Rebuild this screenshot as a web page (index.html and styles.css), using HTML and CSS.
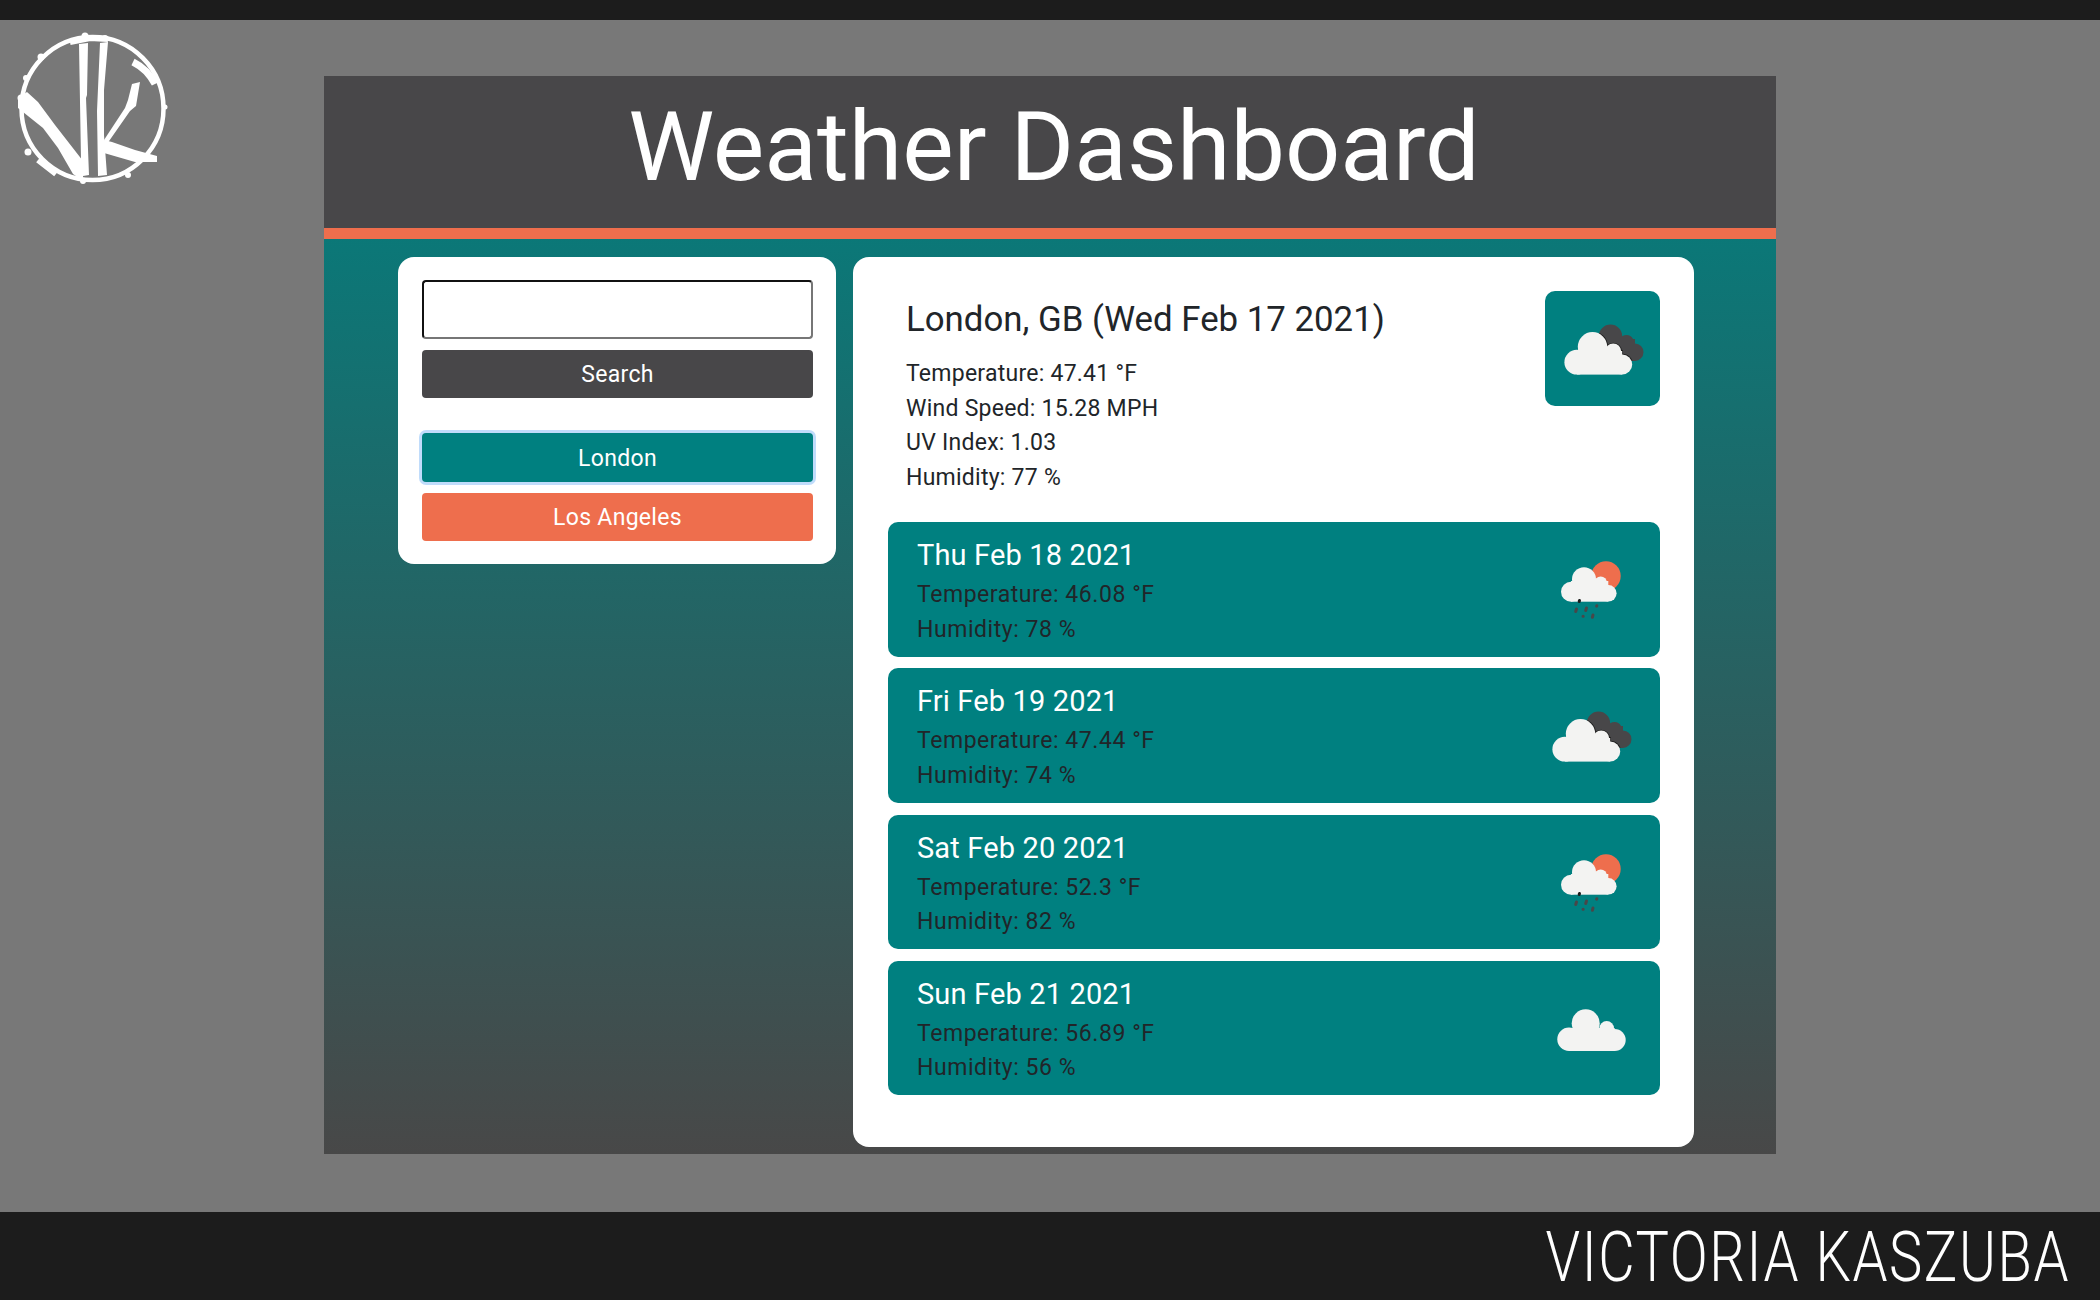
FILE: index.html
```html
<!DOCTYPE html>
<html lang="en">
<head>
    <meta charset="UTF-8">
    <meta name="viewport" content="width=device-width, initial-scale=1.0">
    <title>Weather Dashboard</title>
    <link rel="stylesheet" href="styles.css">
</head>
<body>
    <svg class="icon-defs" width="0" height="0">
        <defs>
            <g id="cloud-shape">
                <circle cx="23.800" cy="63.200" r="12.400"/>
                <circle cx="39.500" cy="47.800" r="14.700"/>
                <circle cx="60.200" cy="52.500" r="8"/>
                <circle cx="69.200" cy="65.500" r="10"/>
                <rect x="23.800" y="52" width="45.400" height="23.600"/>
            </g>
            <clipPath id="dark-clip">
                <circle cx="57.500" cy="37.200" r="11.700"/>
                <circle cx="73.500" cy="43.200" r="7.300"/>
                <circle cx="81.800" cy="53.200" r="8.700"/>
                <rect x="55" y="40" width="27" height="22"/>
            </clipPath>
            <symbol id="icon-clouds" viewBox="0 0 100 100">
                <g fill="#484749" clip-path="url(#dark-clip)">
                    <rect x="40" y="20" width="55" height="45"/>
                    <use href="#cloud-shape" stroke="#1c1c1c" stroke-width="1.600"/>
                </g>
                <use href="#cloud-shape" fill="#f3f3f2"/>
            </symbol>
            <symbol id="icon-rain" viewBox="0 0 100 100">
                <circle fill="#ee6e4d" cx="65" cy="37" r="14.700"/>
                <g fill="#f3f3f2">
                    <circle cx="30" cy="52.700" r="10"/>
                    <circle cx="43" cy="40.300" r="12"/>
                    <circle cx="59.700" cy="43.700" r="6.300"/>
                    <circle cx="67.300" cy="54.300" r="8.300"/>
                    <rect x="30" y="42" width="37.300" height="20.700"/>
                </g>
                <path stroke="#1c1c1c" stroke-width="3" stroke-linecap="round" d="M38.500 61.500l-.3 1"/>
                <path stroke="#484749" stroke-width="3" stroke-linecap="round" d="M35.500 70l-.8 2.500M45.500 69l-.8 2.500M55.800 66.700l-.2.500M42 77.300h.2M52 76l-.6 2.300"/>
            </symbol>
            <symbol id="icon-cloud" viewBox="0 0 100 100">
                <g fill="#f3f3f2">
                    <circle cx="28" cy="61.300" r="11.700"/>
                    <circle cx="44.700" cy="45.300" r="14"/>
                    <circle cx="65.700" cy="50.300" r="7.300"/>
                    <circle cx="73.700" cy="62" r="11"/>
                    <rect x="28" y="50" width="45.700" height="23"/>
                </g>
            </symbol>
        </defs>
    </svg>

    <div class="top-bar"></div>

    <svg class="logo" viewBox="0 0 180 190" width="180" height="190" aria-label="VK logo">
        <ellipse cx="92.500" cy="108.500" rx="71" ry="71.500" fill="none" stroke="#fff" stroke-width="4.500"/>
        <path fill="none" stroke="#fff" stroke-width="7" d="M133 62c10 5 17 12 22 22"/>
        <path fill="none" stroke="#fff" stroke-width="6" d="M70 42l20-4 18 1M38 160l18 14"/>
        <g fill="#fff">
            <circle cx="85" cy="36" r="3.500"/>
            <circle cx="105" cy="38" r="3"/>
            <circle cx="41" cy="57" r="3.500"/>
            <circle cx="26" cy="78" r="3"/>
            <circle cx="21" cy="98" r="3.500"/>
            <circle cx="165" cy="107" r="2.500"/>
            <circle cx="28" cy="152" r="3.500"/>
            <circle cx="83" cy="181" r="3"/>
            <circle cx="128" cy="175" r="3"/>
            <path d="M18 98l9-6 11 10 17 23 28 36v20l-10-7-15-26-15-20-25-20z"/>
            <path d="M79 44l9-1-1 52-1 3 3 77-6 1-2-16z"/>
            <path d="M100 43l8-1-4 48v45l3 40-9 1-1-65z"/>
            <path d="M104 140l21-32 3-8 4-16 8-2-4 24-6 5-23 33z"/>
            <path d="M104 140l8 2 23 8 22 6v6l-22 0-31-9z"/>
        </g>
    </svg>

    <main class="stage">
        <section class="app">
            <header class="app-header">
                <h1>Weather Dashboard</h1>
            </header>
            <div class="app-body">
                <aside class="search-card">
                    <input type="text" class="search-input">
                    <button class="btn btn-search">Search</button>
                    <button class="btn btn-city btn-active">London</button>
                    <button class="btn btn-city btn-orange">Los Angeles</button>
                </aside>
                <div class="weather-card">
                    <div class="today">
                        <div class="today-text">
                            <h2>London, GB (Wed Feb 17 2021)</h2>
                            <p>Temperature: 47.41 °F</p>
                            <p>Wind Speed: 15.28 MPH</p>
                            <p>UV Index: 1.03</p>
                            <p>Humidity: 77 %</p>
                        </div>
                        <div class="today-icon">
                            <svg width="100" height="100"><use href="#icon-clouds"/></svg>
                        </div>
                    </div>
                    <div class="forecast">
                        <div class="day">
                            <div>
                                <h3>Thu Feb 18 2021</h3>
                                <p>Temperature: 46.08 °F</p>
                                <p>Humidity: 78 %</p>
                            </div>
                            <svg width="100" height="100"><use href="#icon-rain"/></svg>
                        </div>
                        <div class="day">
                            <div>
                                <h3>Fri Feb 19 2021</h3>
                                <p>Temperature: 47.44 °F</p>
                                <p>Humidity: 74 %</p>
                            </div>
                            <svg width="100" height="100"><use href="#icon-clouds"/></svg>
                        </div>
                        <div class="day">
                            <div>
                                <h3>Sat Feb 20 2021</h3>
                                <p>Temperature: 52.3 °F</p>
                                <p>Humidity: 82 %</p>
                            </div>
                            <svg width="100" height="100"><use href="#icon-rain"/></svg>
                        </div>
                        <div class="day">
                            <div>
                                <h3>Sun Feb 21 2021</h3>
                                <p>Temperature: 56.89 °F</p>
                                <p>Humidity: 56 %</p>
                            </div>
                            <svg width="100" height="100"><use href="#icon-cloud"/></svg>
                        </div>
                    </div>
                </div>
            </div>
        </section>
    </main>

    <footer class="bottom-bar">
        <span>VICTORIA KASZUBA</span>
    </footer>
</body>
</html>
```

FILE: styles.css
```css
* {
    box-sizing: border-box;
}
html, body {
    height: 100%;
}
body {
    margin: 0;
    height: 1300px;
    display: flex;
    flex-direction: column;
    position: relative;
    overflow: hidden;
    background: #787878;
    font-family: Roboto, Arial, sans-serif;
    color: #212529;
}
h1, h2, h3, p {
    margin: 0;
    font-weight: 400;
}
.icon-defs {
    position: absolute;
}
.top-bar {
    height: 20px;
    background: #1c1c1c;
}
.logo {
    position: absolute;
    left: 0;
    top: 0;
}
.stage {
    flex: 1;
    padding-top: 56px;
}
.app {
    width: 1452px;
    height: 1078px;
    margin: 0 auto;
    display: flex;
    flex-direction: column;
    background: linear-gradient(#008080, #484848);
}
.app-header {
    height: 163px;
    padding-left: 8px;
    background: #484749;
    border-bottom: 11px solid #ee6e4d;
    text-align: center;
}
.app-header h1 {
    font-size: 97px;
    line-height: 142px;
    color: #fff;
}
.app-body {
    flex: 1;
    display: flex;
    align-items: flex-start;
    gap: 17px;
    padding: 18px 0 0 74px;
}
.search-card {
    width: 438px;
    height: 307px;
    padding: 23px 23px 0 24px;
    display: flex;
    flex-direction: column;
    background: #fff;
    border-radius: 16px;
}
.search-input {
    height: 59px;
    margin-bottom: 11px;
    border: 2px solid #767676;
    border-top-color: #111;
    border-left-color: #111;
    border-radius: 4px;
    background: #fff;
}
.btn {
    height: 48px;
    padding-top: 2px;
    border: none;
    border-radius: 4px;
    color: #fff;
    font-family: inherit;
    font-size: 23px;
    letter-spacing: .3px;
}
.btn-search {
    background: #484749;
    margin-bottom: 35px;
}
.btn-city {
    background: #008080;
}
.btn-active {
    height: 49px;
    margin-bottom: 11px;
    box-shadow: 0 0 0 3px #c0dcfb;
}
.btn-orange {
    background: #ee6e4d;
}
.weather-card {
    width: 841px;
    height: 890px;
    padding: 34px 34px 34px 35px;
    background: #fff;
    border-radius: 16px;
}
.today {
    height: 231px;
    display: flex;
    justify-content: space-between;
    align-items: flex-start;
}
.today-text {
    padding: 6px 0 0 18px;
}
.today-text h2 {
    font-size: 34.800px;
    line-height: 44px;
    margin-bottom: 16px;
}
.today-text p, .day p {
    font-size: 23px;
    line-height: 34.500px;
}
.today-text p {
    letter-spacing: .25px;
}
.day p {
    letter-spacing: .55px;
}
.today-icon {
    width: 115px;
    height: 115px;
    padding: 7.500px;
    background: #008080;
    border-radius: 10px;
}
.forecast {
    display: flex;
    flex-direction: column;
    gap: 11.800px;
}
.day {
    height: 134.500px;
    padding: 0 19px 0 29px;
    display: flex;
    justify-content: space-between;
    align-items: center;
    background: #008080;
    border-radius: 10px;
}
.day > div {
    align-self: flex-start;
    padding-top: 13px;
}
.day h3 {
    font-size: 29px;
    line-height: 40px;
    margin-bottom: 3px;
    letter-spacing: .15px;
    color: #fff;
}
.bottom-bar {
    height: 88px;
    padding-right: 30px;
    display: flex;
    justify-content: flex-end;
    align-items: center;
    background: #1c1c1c;
}
.bottom-bar span {
    font-size: 71px;
    font-weight: 300;
    letter-spacing: 2px;
    color: #fff;
    transform: scaleX(.79);
    transform-origin: right center;
}
```
